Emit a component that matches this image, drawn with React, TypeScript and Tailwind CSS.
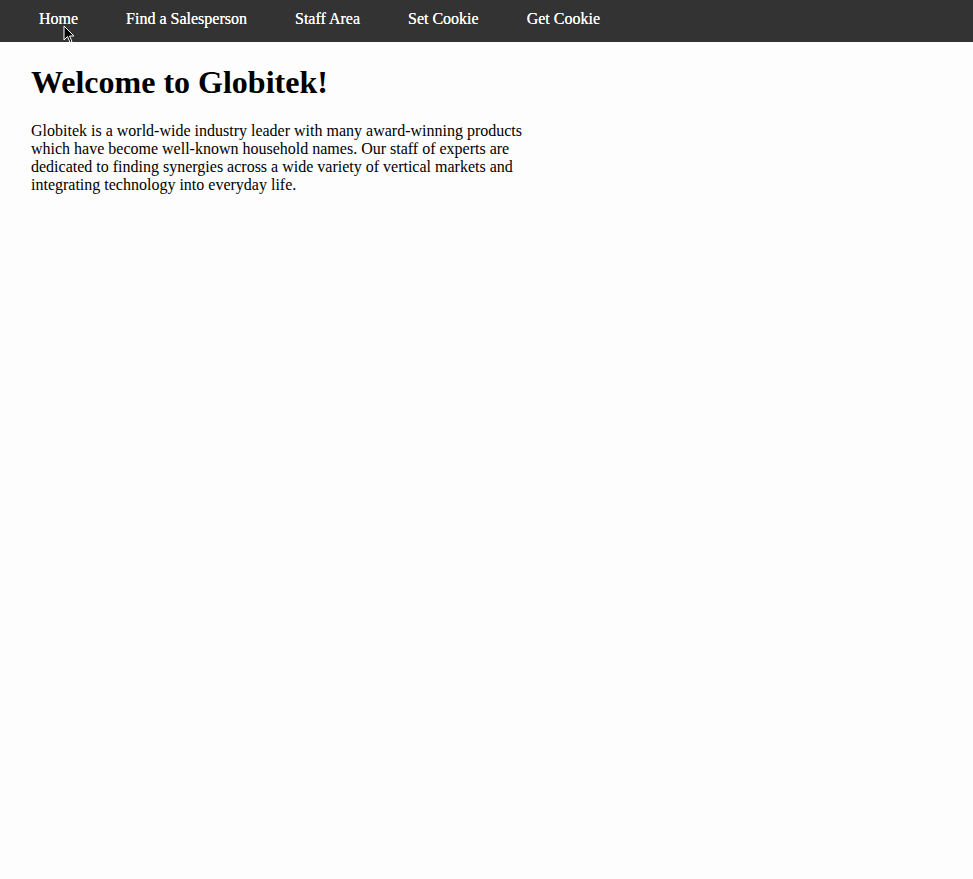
export default function App() {
  const links = ['Home', 'Find a Salesperson', 'Staff Area', 'Set Cookie', 'Get Cookie'];

  return (
    <div className="relative min-h-[879px] bg-[#fdfdfd] text-black font-['Liberation_Serif',serif]">
      <nav className="flex h-[42px] items-center bg-[#333333] pb-1 pl-[15px]">
        {links.map((l) => (
          <a key={l} href="#" className="px-6 text-[16px] text-white [text-shadow:0_0_0.4px_#fff]">
            {l}
          </a>
        ))}
      </nav>

      <main className="px-[31px]">
        <h1 className="mt-[22px] text-[32px] font-bold leading-[37px]">Welcome to Globitek!</h1>
        <p className="mt-[21px] w-[500px] text-[16px] leading-[18px]">
          Globitek is a world-wide industry leader with many award-winning products which have
          become well-known household names. Our staff of experts are dedicated to finding synergies
          across a wide variety of vertical markets and integrating technology into everyday life.
        </p>
      </main>

      {/* mouse pointer seen in the screenshot */}
      <svg className="absolute left-[63px] top-[25px]" width="12" height="19" viewBox="0 0 12 19">
        <path d="M1 1 L1 15 L4.5 11.5 L7 17.5 L9 16.5 L6.5 11 L11 11 Z" fill="#000" stroke="#fff" strokeWidth="1" />
      </svg>
    </div>
  );
}
